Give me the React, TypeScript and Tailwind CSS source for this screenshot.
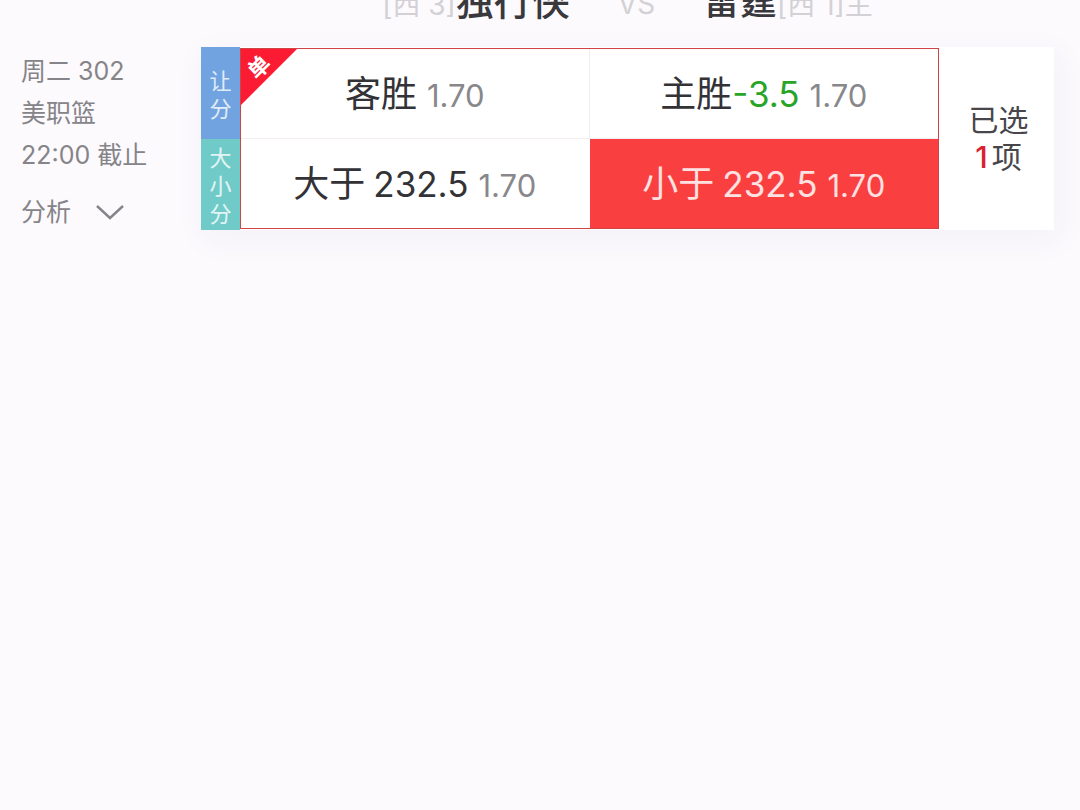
import { useState } from "react";

type Pick = { id: string; label: string; line?: string; handicap?: string; odds: string };

const picks: Pick[] = [
  { id: "away", label: "客胜", odds: "1.70" },
  { id: "home", label: "主胜", handicap: "-3.5", odds: "1.70" },
  { id: "over", label: "大于", line: "232.5", odds: "1.70" },
  { id: "under", label: "小于", line: "232.5", odds: "1.70" },
];

const cellEdges = [
  "border-r border-b border-[#f3edf2]",
  "border-b border-[#f3edf2]",
  "border-r border-transparent",
  "",
];

function MarketLabel({ text, tone }: { text: string; tone: string }) {
  return (
    <div className={`flex flex-1 items-center justify-center pt-1 text-white/80 ${tone}`}>
      <span className="w-6 text-center text-[22px] leading-7">{text}</span>
    </div>
  );
}

function PickButton({
  pick,
  edges,
  active,
  onToggle,
}: {
  pick: Pick;
  edges: string;
  active: boolean;
  onToggle: () => void;
}) {
  const tone = active ? "bg-[#f93f40] text-white/85" : "text-[#333236]";
  return (
    <button
      type="button"
      aria-pressed={active}
      onClick={onToggle}
      className={`flex items-baseline justify-center pt-4 leading-[58px] whitespace-nowrap ${edges} ${tone}`}
    >
      <span className="text-[36px]">{pick.label}</span>
      {pick.line && <span className="ml-2 text-[35px]">{pick.line}</span>}
      {pick.handicap && <span className="text-[35px] text-[#28a428]">{pick.handicap}</span>}
      <span className={`ml-2.5 text-[31px] ${active ? "" : "text-[#88878b]"}`}>{pick.odds}</span>
    </button>
  );
}

export default function App() {
  const [selected, setSelected] = useState<string[]>(["under"]);
  const toggle = (id: string) =>
    setSelected((now) => (now.includes(id) ? now.filter((x) => x !== id) : [...now, id]));

  return (
    <main className="min-h-screen bg-[#fcfafd] font-['Inter','Noto_Sans_CJK_SC',sans-serif]">
      <header className="flex h-6 items-end justify-center gap-12 overflow-hidden pr-[26px] pl-[201px] text-[28px] leading-[38px] whitespace-nowrap text-[#d3d1d5]">
        <div className="flex items-baseline">
          <span>[西 3]</span>
          <span className="text-[38px] font-medium text-[#39383c]">独行侠</span>
        </div>
        <span className="pb-px">VS</span>
        <div className="flex items-baseline">
          <span className="text-[37px] font-medium text-[#39383c]">雷霆</span>
          <span>[西 1]主</span>
        </div>
      </header>

      <section className="flex pt-[23px] pr-[26px]">
        <div className="w-[201px] shrink-0 pt-[3px] pl-[21px] text-[25px] leading-[42px] text-[#858488]">
          <p>周二 302</p>
          <p>美职篮</p>
          <p>22:00 截止</p>
          <button type="button" className="mt-[15px] flex items-center gap-6">
            分析
            <svg viewBox="0 0 30 16" className="h-4 w-[30px]" fill="none" stroke="currentColor" strokeWidth="2.4" aria-hidden="true">
              <path d="M2 2 L15 14 L28 2" />
            </svg>
          </button>
        </div>

        <div className="flex h-[183px] flex-1 self-start bg-white shadow-[4px_8px_28px_4px_rgba(60,50,90,0.04)]">
          <div className="flex w-[39px] flex-col">
            <MarketLabel text="让分" tone="bg-[#70a3e0]" />
            <MarketLabel text="大小分" tone="bg-[#70cbc8]" />
          </div>

          <div className="relative my-px grid flex-1 grid-cols-2 grid-rows-2 border border-[#cf4547]">
            {picks.map((pick, i) => (
              <PickButton
                key={pick.id}
                pick={pick}
                edges={cellEdges[i]}
                active={selected.includes(pick.id)}
                onToggle={() => toggle(pick.id)}
              />
            ))}
            <div className="absolute top-0 left-0 size-14 bg-[#fb1c34] text-white [clip-path:polygon(0_0,100%_0,0_100%)]">
              <span className="flex size-9 -rotate-45 items-center justify-center text-[22px] font-bold">单</span>
            </div>
          </div>

          <div className="flex w-[115px] flex-col items-center justify-center pl-1 text-[30px] leading-[37px] text-[#47464a]">
            <span>已选</span>
            <span>
              <b className="mr-1 font-medium text-[#dc2030]">{selected.length}</b>项
            </span>
          </div>
        </div>
      </section>
    </main>
  );
}
